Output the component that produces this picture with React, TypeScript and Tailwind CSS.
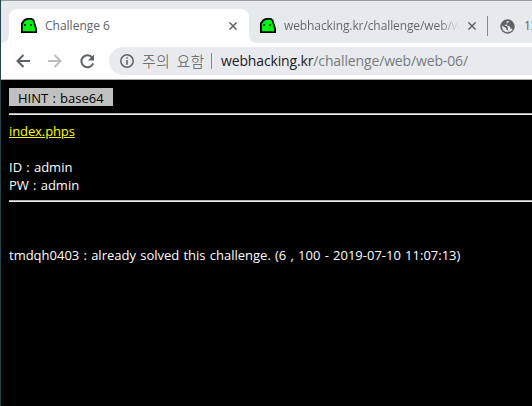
import type { ReactNode } from 'react';

function Ghost() {
  return (
    <svg width="16" height="16" viewBox="0 0 16 16" className="shrink-0">
      <path d="M0 15V5L3 1.2 6 0h5l2.3 1.8L14.5 6 16 10.5V15z" fill="#000" />
      <path d="M1.8 13.2V6L4 3l2.5-1.2h4L12 3.2 13 7l1.2 4v2.2z" fill="#00f510" />
      <path d="M3 6h2v2H3zM9 6h2v2H9z" fill="#043d08" />
    </svg>
  );
}

function Close() {
  return (
    <svg width="8" height="8" viewBox="0 0 8 8" className="shrink-0" fill="none" stroke="#5f6368" strokeWidth="1.5">
      <path d="M.4.4l7.2 7.2M7.6.4L.4 7.6" />
    </svg>
  );
}

function Line({ className, children }: { className: string; children: ReactNode }) {
  return <div className={`whitespace-nowrap ${className}`}>{children}</div>;
}

function TabStrip() {
  return (
    <div className="flex h-[42px] bg-[#e7eaed] pt-2 text-[12px] leading-[34px] text-[#5f6368]">
      <div className="flex w-2 items-end bg-white">
        <div className="h-full w-2 rounded-br-lg bg-[#e7eaed]" />
      </div>
      <div className="flex w-60 shrink-0 bg-[#e7eaed]">
        <div className="flex w-full items-center rounded-t-lg bg-white pl-3 pr-3">
          <Ghost />
          <span className="ml-2 w-[184px] whitespace-nowrap">Challenge 6</span>
          <Close />
        </div>
      </div>
      <div className="flex flex-1 bg-white">
        <div className="flex w-full items-center overflow-hidden rounded-bl-lg bg-[#e7eaed] pl-[11px]">
          <Ghost />
          <span className="ml-2 w-[176px] shrink-0 overflow-hidden whitespace-nowrap bg-gradient-to-r from-[#5f6368] from-88% to-transparent bg-clip-text tracking-[-0.1px] text-transparent">
            webhacking.kr/challenge/web/web
          </span>
          <span className="ml-2"><Close /></span>
          <span className="ml-[11px] h-5 w-px shrink-0 bg-[#85888c]" />
          <svg className="ml-3 shrink-0" width="15" height="15" viewBox="0 0 15 15">
            <circle cx="7.5" cy="7.5" r="7.2" fill="#5f6368" />
            <path d="M6.5 2.2h2.2L8.5 3.5 6.7 4.6v1.1H5.2v1.4h4.2l.8 1.3v1.2h1.2l1.2.8-2 2-2.6.8v-1.7L6 10.300V9L2.100 6.800 2 8.200l1 3 2.800 1.900 2.700.2z" fill="#e7eaed" />
          </svg>
          <span className="ml-[9px] whitespace-nowrap">12</span>
        </div>
      </div>
    </div>
  );
}

function Toolbar() {
  return (
    <div className="flex h-9 items-center bg-white text-[14px] text-[#777b80]">
      <div className="flex w-[108px] items-center pl-[15px]">
        <svg width="14" height="14" viewBox="0 0 14 14" fill="none" stroke="#5f6368" strokeWidth="2"><path d="M14 7H1.5M7.5 1l-6 6 6 6" /></svg>
        <svg className="ml-[18px]" width="14" height="14" viewBox="0 0 14 14" fill="none" stroke="#bcbec0" strokeWidth="2"><path d="M0 7h12.5M6.5 1l6 6-6 6" /></svg>
        <svg className="ml-[18px]" width="15" height="15" viewBox="0 0 15 15"><path d="M12.3 3.8A6 6 0 1 0 13.1 9.3" fill="none" stroke="#5f6368" strokeWidth="2" /><path d="M14 .5v6H8z" fill="#5f6368" /></svg>
      </div>
      <div className="flex h-7 flex-1 items-center overflow-hidden whitespace-nowrap rounded-l-full bg-[#e8eaed] pl-[11px] leading-7">
        <svg className="shrink-0" width="14" height="14" viewBox="0 0 14 14"><circle cx="7" cy="7" r="6.2" fill="none" stroke="#5f6368" strokeWidth="1.5" /><path d="M6.2 3.2h1.6v1.6H6.2zM6.2 6h1.6v4.7H6.2z" fill="#5f6368" /></svg>
        <span className="ml-2 w-[66px] shrink-0 text-[15px] font-light tracking-[0.3px] text-[#55585d] [word-spacing:2px]">주의 요함</span>
        <span className="ml-[3px] h-4 w-px shrink-0 bg-[#85888c]" />
        <span className="ml-[9px] tracking-[-0.14px]"><span className="text-[#202124]">webhacking.kr</span>/challenge/web/web-06/</span>
      </div>
    </div>
  );
}

export default function App() {
  return (
    <div className="flex h-[406px] w-[532px] flex-col overflow-hidden border-l border-[#29434f] bg-black font-['Open_Sans','Noto_Sans_CJK_KR',sans-serif]">
      <div className="h-px shrink-0 bg-[#989b9f]" />
      <TabStrip />
      <Toolbar />
      <div className="h-px shrink-0 bg-[#aaa]" />
      <main className="flex-1 pl-2 pt-2 text-[13px] leading-[18px] text-white [word-spacing:0.85px]">
        <div className="h-[18px] w-[104px] whitespace-nowrap bg-[#c0c0c0] pl-[9px] leading-[20px] text-black">HINT : base64</div>
        <div className="mt-[7px] h-0.5 border-t border-[#b0b0b0] bg-[#eee]" />
        <Line className="mt-[7px] tracking-[-0.1px] text-[#ffff00]"><span className="underline">index.phps</span></Line>
        <div className="h-[18px]" />
        <Line className="">ID : admin</Line>
        <Line className="">PW : admin</Line>
        <div className="mt-[6px] h-0.5 border-t border-[#b0b0b0] bg-[#eee]" />
        <Line className="mt-11">tmdqh0403 : already solved this challenge. (6 , 100 - 2019-07-10 11:07:13)</Line>
      </main>
    </div>
  );
}
